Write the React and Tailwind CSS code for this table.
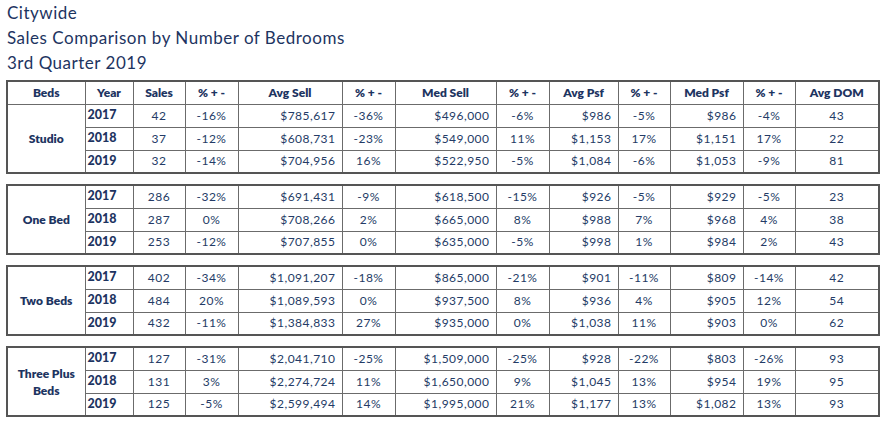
const groups = [
  {
    beds: "Studio",
    rows: [
      ["2017", "42", "-16%", "$785,617", "-36%", "$496,000", "-6%", "$986", "-5%", "$986", "-4%", "43"],
      ["2018", "37", "-12%", "$608,731", "-23%", "$549,000", "11%", "$1,153", "17%", "$1,151", "17%", "22"],
      ["2019", "32", "-14%", "$704,956", "16%", "$522,950", "-5%", "$1,084", "-6%", "$1,053", "-9%", "81"],
    ],
  },
  {
    beds: "One Bed",
    rows: [
      ["2017", "286", "-32%", "$691,431", "-9%", "$618,500", "-15%", "$926", "-5%", "$929", "-5%", "23"],
      ["2018", "287", "0%", "$708,266", "2%", "$665,000", "8%", "$988", "7%", "$968", "4%", "38"],
      ["2019", "253", "-12%", "$707,855", "0%", "$635,000", "-5%", "$998", "1%", "$984", "2%", "43"],
    ],
  },
  {
    beds: "Two Beds",
    rows: [
      ["2017", "402", "-34%", "$1,091,207", "-18%", "$865,000", "-21%", "$901", "-11%", "$809", "-14%", "42"],
      ["2018", "484", "20%", "$1,089,593", "0%", "$937,500", "8%", "$936", "4%", "$905", "12%", "54"],
      ["2019", "432", "-11%", "$1,384,833", "27%", "$935,000", "0%", "$1,038", "11%", "$903", "0%", "62"],
    ],
  },
  {
    beds: "Three Plus Beds",
    rows: [
      ["2017", "127", "-31%", "$2,041,710", "-25%", "$1,509,000", "-25%", "$928", "-22%", "$803", "-26%", "93"],
      ["2018", "131", "3%", "$2,274,724", "11%", "$1,650,000", "9%", "$1,045", "13%", "$954", "19%", "95"],
      ["2019", "125", "-5%", "$2,599,494", "14%", "$1,995,000", "21%", "$1,177", "13%", "$1,082", "13%", "93"],
    ],
  },
];

const widths = [78, 48, 52, 53, 104, 53, 101, 53, 69, 52, 73, 52, 84];
const headers = ["Beds", "Year", "Sales", "% + -", "Avg Sell", "% + -", "Med Sell", "% + -", "Avg Psf", "% + -", "Med Psf", "% + -", "Avg DOM"];
// alignment for the 11 value columns after Year
const valueAlign = ["text-center", "text-center", "text-right", "text-center", "text-right", "text-center", "text-right", "text-center", "text-right", "text-center", "text-center"];

const cell = "border border-[#6b6b6b] h-[23px] p-0";

function Cols() {
  return (
    <colgroup>
      {widths.map((w, i) => (
        <col key={i} style={{ width: w }} />
      ))}
    </colgroup>
  );
}

function Group({ group, withHeader }) {
  return (
    <table className="table-fixed border-collapse w-[872px] border-2 border-[#555]">
      <Cols />
      <tbody>
        {withHeader && (
          <tr>
            {headers.map((h, i) => (
              <th key={i} className={`${cell} text-center font-extrabold text-[12px]`}>
                {h}
              </th>
            ))}
          </tr>
        )}
        {group.rows.map((r, ri) => (
          <tr key={ri}>
            {ri === 0 && (
              <td rowSpan={3} className={`${cell} text-center font-extrabold text-[12px] leading-[17px] px-[2px]`}>
                {group.beds}
              </td>
            )}
            <td className={`${cell} font-black text-[12.5px] pl-[2px]`}>{r[0]}</td>
            {r.slice(1).map((v, vi) => (
              <td
                key={vi}
                className={`${cell} text-[12px] tracking-[0.04em] text-[#243b66] ${valueAlign[vi]} ${
                  valueAlign[vi] === "text-right" ? "pr-[6px]" : ""
                }`}
              >
                {v}
              </td>
            ))}
          </tr>
        ))}
      </tbody>
    </table>
  );
}

export default function App() {
  return (
    <div className="w-[885px] h-[423px] bg-white text-[#1d3461] font-['Lato','Open_Sans',sans-serif] pl-[6px]">
      <div className="text-[17px] leading-[25px] tracking-[0.03em] pl-[1px] pt-[-1px]">
        <div>Citywide</div>
        <div>Sales Comparison by Number of Bedrooms</div>
        <div>3rd Quarter 2019</div>
      </div>
      <div className="flex flex-col gap-[10px] mt-[5px]">
        {groups.map((g, i) => (
          <Group key={i} group={g} withHeader={i === 0} />
        ))}
      </div>
    </div>
  );
}
